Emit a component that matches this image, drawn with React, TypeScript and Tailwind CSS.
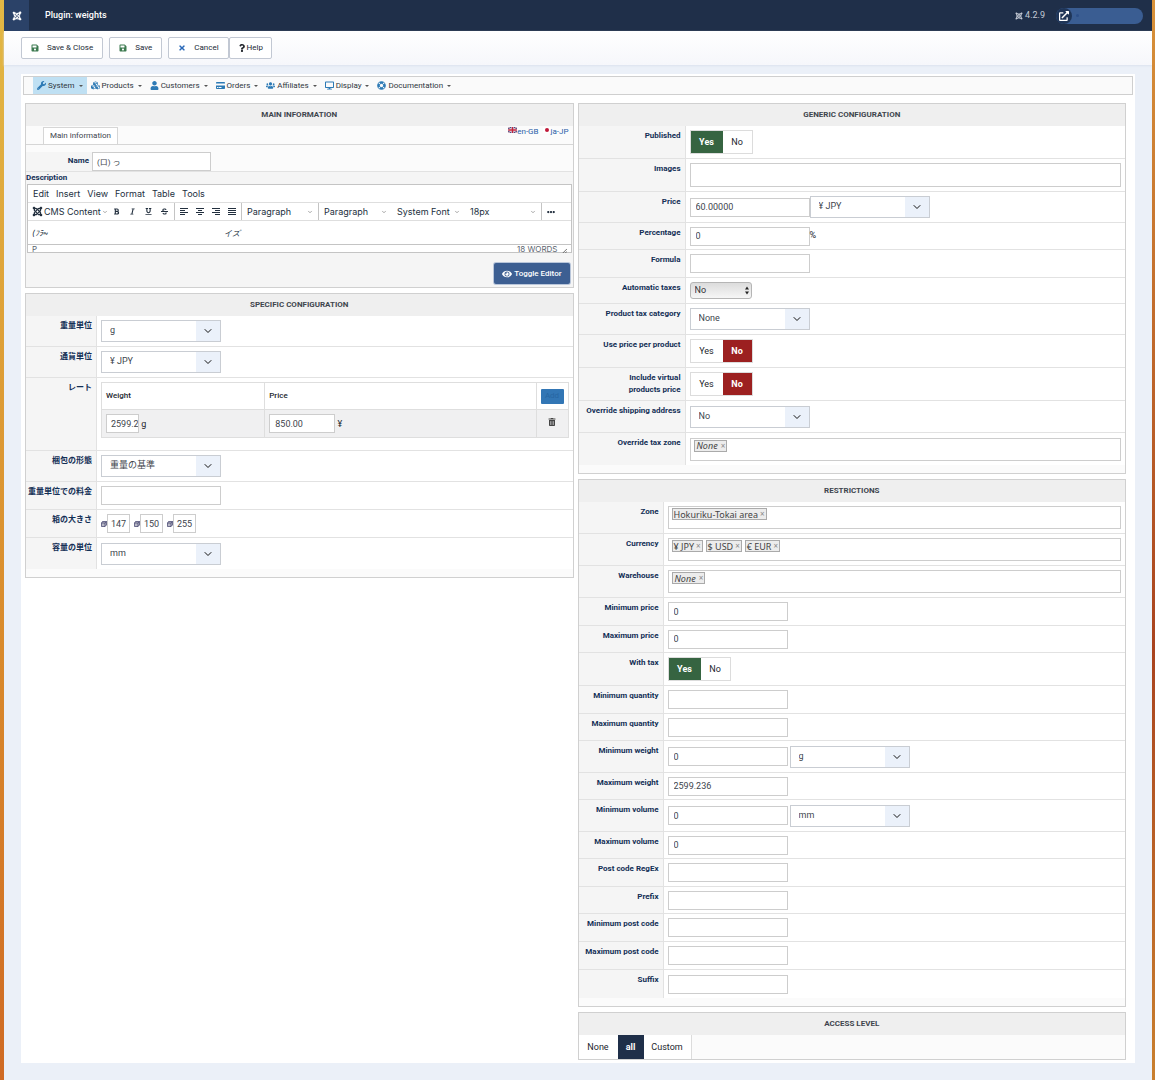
import type { ReactNode } from "react"
import {
  FaBold,
  FaCreditCard,
  FaCubes,
  FaDesktop,
  FaEllipsisH,
  FaExternalLinkAlt,
  FaEye,
  FaItalic,
  FaJoomla,
  FaLifeRing,
  FaQuestion,
  FaSave,
  FaStrikethrough,
  FaTimes,
  FaTrashAlt,
  FaUnderline,
  FaUser,
  FaUsers,
  FaWrench,
} from "react-icons/fa"
import { LuChevronDown } from "react-icons/lu"

const Header = () => (
  <header className="flex h-[31px] items-center bg-[#1f2f49] text-white">
    <a href="#home" aria-label="Home" className="flex h-full w-[25px] items-center justify-center bg-[#2b4268]">
      <FaJoomla className="size-[10px]" />
    </a>
    <h1 className="ml-4 text-[9px] font-medium">Plugin: weights</h1>
    <div className="ml-auto mr-[9px] flex items-center">
      <FaJoomla className="size-2 text-[#c5cbd6]" />
      <span className="ml-0.5 mr-[11px] text-[9px] text-[#c5cbd6]">4.2.9</span>
      <a href="#site" aria-label="Open site" className="flex h-4 w-[87px] items-center rounded-full bg-[#3a5d92]">
        <span className="flex size-4 items-center justify-center rounded-full bg-[#1f3557]">
          <FaExternalLinkAlt className="size-[10px]" />
        </span>
        <span className="ml-1 size-[3px] rounded-full bg-[#2c4f88]" />
      </a>
    </div>
  </header>
)

const ToolButton = ({ icon, children, className }: { icon: ReactNode; children: ReactNode; className: string }) => (
  <button
    type="button"
    className={`flex h-[22px] items-center rounded-[2px] border border-[#c2c8d3] bg-white text-[8px] text-[#222a36] ${className}`}
  >
    {icon}
    {children}
  </button>
)

const Toolbar = () => (
  <div className="flex h-[34px] items-center bg-linear-to-b from-white to-[#f6f7fb] pl-[17px] shadow-[0_1px_2px_#dbe2ee]">
    <ToolButton icon={<FaSave className="size-2 text-[#3d7a50]" />} className="gap-2 px-[9px]">
      Save &amp; Close
    </ToolButton>
    <ToolButton icon={<FaSave className="size-2 text-[#3d7a50]" />} className="ml-1.5 gap-2 px-[9px]">
      Save
    </ToolButton>
    <ToolButton icon={<FaTimes className="size-2 text-[#2a69b8]" />} className="ml-1.5 gap-2 px-[9px]">
      Cancel
    </ToolButton>
    <ToolButton icon={<FaQuestion className="size-2 text-[#22262d]" />} className="gap-px px-2">
      Help
    </ToolButton>
  </div>
)

const menu = [
  { label: "System", icon: FaWrench, active: true },
  { label: "Products", icon: FaCubes },
  { label: "Customers", icon: FaUser },
  { label: "Orders", icon: FaCreditCard },
  { label: "Affiliates", icon: FaUsers },
  { label: "Display", icon: FaDesktop },
  { label: "Documentation", icon: FaLifeRing },
]

const MenuBar = () => (
  <nav className="flex h-[19px] border border-[#cfcfcf] bg-[#fafafa] pl-[9px]">
    {menu.map(({ label, icon: Icon, active }) => (
      <a
        key={label}
        href={`#${label.toLowerCase()}`}
        className={`flex items-center px-1 text-[8px] text-[#2f3640] ${active ? "bg-[#bfe0f3]" : ""}`}
      >
        <Icon className="mr-0.5 size-[9px] text-[#2d7ab5]" />
        {label}
        <span className="ml-1 border-x-2 border-t-2 border-x-transparent border-t-[#555]" />
      </a>
    ))}
  </nav>
)

const Panel = ({ title, children }: { title: string; children: ReactNode }) => (
  <section className="border border-[#d0d0d0] bg-[#fbfbfb]">
    <h2 className="flex h-[22px] items-center justify-center bg-[#efefef] text-[8px] font-bold uppercase text-[#40454d]">
      {title}
    </h2>
    {children}
  </section>
)

type RowProps = {
  label: string
  htmlFor?: string
  labelWidth: string
  height: string
  children: ReactNode
}

const Row = ({ label, htmlFor, labelWidth, height, children }: RowProps) => {
  const text = "block text-right text-[8px] leading-[12px] font-bold text-[#132f55]"
  return (
    <div className={`flex border-b border-[#e2e2e2] bg-white last:border-b-0 ${height}`}>
      <div className={`shrink-0 border-r border-[#e2e2e2] bg-[#f5f5f5] pt-1 pr-1 ${labelWidth}`}>
        {htmlFor ? (
          <label htmlFor={htmlFor} className={text}>
            {label}
          </label>
        ) : (
          <span className={text}>{label}</span>
        )}
      </div>
      <div className="flex min-w-0 flex-1 items-center px-1 text-[9px]">{children}</div>
    </div>
  )
}

type TextInputProps = {
  id?: string
  value?: string
  size?: string
  label?: string
}

const TextInput = ({ id, value = "", size = "w-[120px] px-[5px]", label }: TextInputProps) => (
  <input
    id={id}
    aria-label={label}
    defaultValue={value}
    className={`h-[19px] border border-[#cdcdcd] bg-white text-[9px] text-[#40454d] ${size}`}
  />
)

const Select = ({ id, value, label }: { id?: string; value: string; label?: string }) => (
  <div className="relative h-[22px] w-[120px]">
    <select
      id={id}
      aria-label={label}
      className="size-full appearance-none border border-[#c9cdd3] bg-white pl-2 text-[9px] text-[#40454d]"
    >
      <option>{value}</option>
    </select>
    <span className="pointer-events-none absolute inset-y-px right-px flex w-6 items-center justify-center bg-[#ebf1fa]">
      <LuChevronDown className="size-3 text-[#111]" />
    </span>
  </div>
)

const YesNo = ({ id, value }: { id: string; value: "Yes" | "No" }) => (
  <div className="relative flex h-6 border border-[#dcdcdc] bg-white text-[9px] leading-[22px] text-[#22262d]">
    <label className={value === "Yes" ? "w-8 bg-[#366441] text-center font-bold text-white" : "w-8 text-center"}>
      <input type="radio" id={value === "Yes" ? id : undefined} name={id} defaultChecked={value === "Yes"} className="sr-only" />
      Yes
    </label>
    <label className={value === "No" ? "w-[29px] bg-[#9c2020] text-center font-bold text-white" : "w-[29px] text-center"}>
      <input type="radio" id={value === "No" ? id : undefined} name={id} defaultChecked={value === "No"} className="sr-only" />
      No
    </label>
  </div>
)

const ChipBox = ({ chips, italic }: { chips: string[]; italic?: boolean }) => (
  <div className="flex h-[23px] w-full items-start gap-[3px] border border-[#cdcdcd] bg-white px-[3px] pt-px">
    {chips.map((chip) => (
      <span
        key={chip}
        className="flex h-3 items-center border border-[#aaa] bg-[#ececec] px-px font-['Noto_Sans',sans-serif] text-[9px] leading-none text-[#444]"
      >
        <span className={italic ? "px-px italic" : ""}>{chip}</span>
        <button type="button" aria-label={`Remove ${chip}`} className="ml-0.5 text-[8px] text-[#888]">
          ×
        </button>
      </span>
    ))}
  </div>
)

const EditorDropdown = ({ label, className }: { label: string; className: string }) => (
  <button type="button" className={`flex items-center justify-between px-[5px] ${className}`}>
    {label}
    <LuChevronDown className="size-[6px] text-[#555]" />
  </button>
)

const textStyles = [
  { name: "Bold", icon: FaBold },
  { name: "Italic", icon: FaItalic },
  { name: "Underline", icon: FaUnderline },
  { name: "Strikethrough", icon: FaStrikethrough },
]

const alignments = [
  { name: "Align left", path: "M0 .5h8M0 2.500h5M0 4.500h8M0 6.500h5" },
  { name: "Align center", path: "M0 .5h8M2 2.500h4M0 4.500h8M2 6.500h4" },
  { name: "Align right", path: "M0 .5h8M3 2.500h5M0 4.500h8M3 6.500h5" },
  { name: "Justify", path: "M0 .5h8M0 2.500h8M0 4.500h8M0 6.500h8" },
]

const Editor = () => (
  <div className="mx-px border border-[#c4c4c4] bg-white font-[Inter,sans-serif] text-[9px] text-[#222f3e]">
    <div className="flex h-[17px] items-center gap-[7px] px-[5px]">
      {["Edit", "Insert", "View", "Format", "Table", "Tools"].map((item) => (
        <button key={item} type="button">
          {item}
        </button>
      ))}
    </div>
    <div className="flex h-[19px] items-stretch border-y border-[#dedede]">
      <button type="button" className="flex w-20 items-center pl-1 whitespace-nowrap">
        <FaJoomla className="mr-px size-[11px]" />
        CMS Content
        <LuChevronDown className="ml-auto size-[6px] text-[#555]" />
      </button>
      <div className="flex border-r border-[#c4c4c4] pr-0.5">
        {textStyles.map(({ name, icon: Icon }) => (
          <button key={name} type="button" aria-label={name} className="flex w-4 items-center justify-center">
            <Icon className="size-[7px]" />
          </button>
        ))}
      </div>
      <div className="flex border-r border-[#c4c4c4] px-px">
        {alignments.map(({ name, path }) => (
          <button key={name} type="button" aria-label={name} className="flex w-4 items-center justify-center">
            <svg viewBox="0 0 8 7" className="h-[7px] w-2" stroke="#222f3e">
              <path d={path} />
            </svg>
          </button>
        ))}
      </div>
      <EditorDropdown label="Paragraph" className="w-[77px] border-r border-[#c4c4c4]" />
      <EditorDropdown label="Paragraph" className="w-[73px]" />
      <EditorDropdown label="System Font" className="w-[73px] whitespace-nowrap" />
      <EditorDropdown label="18px" className="w-[77px] border-r border-[#c4c4c4]" />
      <button type="button" aria-label="More" className="px-[5px]">
        <FaEllipsisH className="size-2" />
      </button>
    </div>
    <div className="flex h-[23px] items-center px-1 text-[8px]">
      <span className="italic">(ﾌﾗ~</span>
      <span className="ml-44 italic">イズ</span>
    </div>
    <div className="flex h-2 items-center justify-between border-t border-[#c4c4c4] px-1 text-[8px] leading-none text-[#5c6570]">
      <span>P</span>
      <span className="flex items-end gap-1">
        18 WORDS
        <svg viewBox="0 0 6 6" className="size-[5px]" stroke="#555" fill="none">
          <path d="M1 6 6 1M4 6 6 4" />
        </svg>
      </span>
    </div>
  </div>
)

const MainInformation = () => (
  <Panel title="Main information">
    <div className="flex h-[19px] items-end border-b border-[#d6d6d6] pl-[17px]">
      <button type="button" className="h-[17px] border border-b-0 border-[#d6d6d6] bg-white px-1.5 text-[8px] text-[#40454d]">
        Main information
      </button>
      <div className="ml-auto flex self-start pr-1 text-[8px] leading-[12px] text-[#2a5ea8]">
        <a href="#en" className="flex items-start">
          <svg viewBox="0 0 16 11" className="mt-px h-[6px] w-[9px]">
            <path fill="#3a3f7c" d="M0 0h16v11H0z" />
            <path stroke="#e9c8ce" strokeWidth="2" d="m0 0 16 11M16 0 0 11" />
            <path stroke="#fff" strokeWidth="4" d="M8 0v11M0 5.5h16" />
            <path stroke="#c2233b" strokeWidth="2.4" d="M8 0v11M0 5.5h16" />
          </svg>
          en-GB
        </a>
        <a href="#ja" className="ml-1 flex items-start">
          <svg viewBox="0 0 16 11" className="mt-px h-[6px] w-2">
            <path fill="#fff" d="M0 0h16v11H0z" />
            <circle cx="8" cy="5.5" r="4" fill="#c01838" />
          </svg>
          ja-JP
        </a>
      </div>
    </div>
    <div className="flex h-[27px] items-end border-b border-[#e2e2e2]">
      <label htmlFor="name" className="h-[19px] w-[66px] bg-[#f5f5f5] pr-[3px] text-right text-[8px] leading-[18px] font-bold text-[#132f55]">
        Name
      </label>
      <input
        id="name"
        defaultValue="(ロ) っ"
        className="h-[19px] w-[119px] border border-[#cdcdcd] bg-white px-1 text-[8px] text-[#40454d]"
      />
    </div>
    <div className="bg-[#f5f5f5]">
      <h3 className="text-[8px] leading-[12px] font-bold text-[#132f55]">Description</h3>
      <Editor />
      <div className="flex justify-end px-[3px] pt-[10px] pb-[3px]">
        <button
          type="button"
          className="flex h-[21px] items-center gap-0.5 rounded-[2px] bg-[#3d5f92] px-2 text-[8px] font-medium text-white shadow-[0_0_0_1px_#b9c6da]"
        >
          <FaEye className="size-[10px]" />
          Toggle Editor
        </button>
      </div>
    </div>
  </Panel>
)

const BoxSize = ({ id, value, label }: { id?: string; value: string; label?: string }) => (
  <div className="mr-1 flex items-center">
    <svg viewBox="0 0 6 6" className="size-[6px]" stroke="#3b3b68" strokeWidth=".7" fill="#b9b9c6">
      <path d="M.5 2h3.500v3.500H.5zM.5 2l1-1.500h4v3.500L4 5.500M4 2l1.500-1.500" />
    </svg>
    <TextInput id={id} value={value} label={label} size="w-[23px] px-px text-center" />
  </div>
)

const SpecificConfiguration = () => {
  const w = "w-[71px]"
  return (
    <Panel title="Specific configuration">
      <div className="pb-2">
        <Row label="重量単位" htmlFor="weight-unit" labelWidth={w} height="min-h-[31px]">
          <Select id="weight-unit" value="g" />
        </Row>
        <Row label="通貨単位" htmlFor="currency-unit" labelWidth={w} height="min-h-[31px]">
          <Select id="currency-unit" value="¥ JPY" />
        </Row>
        <Row label="レート" labelWidth={w} height="min-h-[73px]">
          <table className="mb-2 w-full border-collapse text-left text-[#22262d]">
            <thead>
              <tr className="h-[27px] text-[8px]">
                <th className="w-[35%] border border-[#dedede] px-1 font-medium">Weight</th>
                <th className="border border-[#dedede] px-1 font-medium">Price</th>
                <th className="w-8 border border-[#dedede] px-1">
                  <button type="button" className="block h-[15px] w-[23px] rounded-[1px] bg-[#3276b5] font-normal text-[#2766a3]">
                    Add
                  </button>
                </th>
              </tr>
            </thead>
            <tbody>
              <tr className="h-7 bg-[#f0f0f1]">
                <td className="border border-[#dedede] px-1">
                  <TextInput value="2599.236" label="Weight" size="w-[33px] pl-1" /> g
                </td>
                <td className="border border-[#dedede] px-1">
                  <TextInput value="850.00" label="Price" size="w-[66px] px-[5px]" /> ¥
                </td>
                <td className="border border-[#dedede] pb-1">
                  <button type="button" aria-label="Delete" className="mx-auto block">
                    <FaTrashAlt className="size-2 text-[#444]" />
                  </button>
                </td>
              </tr>
            </tbody>
          </table>
        </Row>
        <Row label="梱包の形態" htmlFor="packing" labelWidth={w} height="min-h-[31px]">
          <Select id="packing" value="重量の基準" />
        </Row>
        <Row label="重量単位での料金" htmlFor="unit-fee" labelWidth={w} height="min-h-7">
          <TextInput id="unit-fee" />
        </Row>
        <Row label="箱の大きさ" htmlFor="box-length" labelWidth={w} height="min-h-7">
          <BoxSize id="box-length" value="147" />
          <BoxSize value="150" label="Width" />
          <BoxSize value="255" label="Height" />
        </Row>
        <Row label="容量の単位" htmlFor="volume-unit" labelWidth={w} height="min-h-[31px]">
          <Select id="volume-unit" value="mm" />
        </Row>
      </div>
    </Panel>
  )
}

const GenericConfiguration = () => {
  const w = "w-[107px]"
  return (
    <Panel title="Generic configuration">
      <div className="pb-2">
        <Row label="Published" htmlFor="published" labelWidth={w} height="min-h-[33px]">
          <YesNo id="published" value="Yes" />
        </Row>
        <Row label="Images" htmlFor="images" labelWidth={w} height="min-h-[33px]">
          <input id="images" className="h-6 w-full border border-[#cdcdcd] bg-white px-[5px]" />
        </Row>
        <Row label="Price" htmlFor="price" labelWidth={w} height="min-h-[31px]">
          <TextInput id="price" value="60.00000" />
          <Select label="Price currency" value="¥ JPY" />
        </Row>
        <Row label="Percentage" htmlFor="percentage" labelWidth={w} height="min-h-[27px]">
          <TextInput id="percentage" value="0" />%
        </Row>
        <Row label="Formula" htmlFor="formula" labelWidth={w} height="min-h-7">
          <TextInput id="formula" />
        </Row>
        <Row label="Automatic taxes" htmlFor="automatic-taxes" labelWidth={w} height="min-h-[26px]">
          <div className="relative h-[17px] w-[62px]">
            <select
              id="automatic-taxes"
              className="size-full appearance-none rounded-[3px] border border-[#b5b5b5] bg-linear-to-b from-[#dcdcdc] to-[#f6f6f6] pl-1 text-[9px] text-[#333]"
            >
              <option>No</option>
            </select>
            <svg viewBox="0 0 4 8" className="pointer-events-none absolute right-[3px] top-1 h-[9px] w-1" fill="#222">
              <path d="M0 3 2 0l2 3zM0 5l2 3 2-3z" />
            </svg>
          </div>
        </Row>
        <Row label="Product tax category" htmlFor="tax-category" labelWidth={w} height="min-h-[31px]">
          <Select id="tax-category" value="None" />
        </Row>
        <Row label="Use price per product" htmlFor="price-per-product" labelWidth={w} height="min-h-[33px]">
          <YesNo id="price-per-product" value="No" />
        </Row>
        <div className="flex h-[33px] border-b border-[#e2e2e2] bg-white">
          <div className="w-[107px] shrink-0 border-r border-[#e2e2e2] bg-[#f5f5f5] pt-1 pr-1">
            <label htmlFor="virtual" className="block text-right text-[8px] leading-[12px] font-bold text-[#132f55]">
              Include virtual
              <br />
              products price
            </label>
          </div>
          <div className="flex items-center px-1">
            <YesNo id="virtual" value="No" />
          </div>
        </div>
        <Row label="Override shipping address" htmlFor="shipping-address" labelWidth={w} height="min-h-8">
          <Select id="shipping-address" value="No" />
        </Row>
        <Row label="Override tax zone" labelWidth={w} height="min-h-8">
          <ChipBox chips={["None"]} italic />
        </Row>
      </div>
    </Panel>
  )
}

const Restrictions = () => {
  const w = "w-[85px]"
  return (
    <Panel title="Restrictions">
      <div className="pb-2">
        <Row label="Zone" labelWidth={w} height="min-h-8">
          <ChipBox chips={["Hokuriku-Tokai area"]} />
        </Row>
        <Row label="Currency" labelWidth={w} height="min-h-8">
          <ChipBox chips={["¥ JPY", "$ USD", "€ EUR"]} />
        </Row>
        <Row label="Warehouse" labelWidth={w} height="min-h-8">
          <ChipBox chips={["None"]} italic />
        </Row>
        <Row label="Minimum price" htmlFor="min-price" labelWidth={w} height="min-h-7">
          <TextInput id="min-price" value="0" />
        </Row>
        <Row label="Maximum price" htmlFor="max-price" labelWidth={w} height="min-h-[27px]">
          <TextInput id="max-price" value="0" />
        </Row>
        <Row label="With tax" htmlFor="with-tax" labelWidth={w} height="min-h-[33px]">
          <YesNo id="with-tax" value="Yes" />
        </Row>
        <Row label="Minimum quantity" htmlFor="min-quantity" labelWidth={w} height="min-h-7">
          <TextInput id="min-quantity" />
        </Row>
        <Row label="Maximum quantity" htmlFor="max-quantity" labelWidth={w} height="min-h-[27px]">
          <TextInput id="max-quantity" />
        </Row>
        <Row label="Minimum weight" htmlFor="min-weight" labelWidth={w} height="min-h-8">
          <TextInput id="min-weight" value="0" />
          <span className="w-0.5" />
          <Select label="Weight unit" value="g" />
        </Row>
        <Row label="Maximum weight" htmlFor="max-weight" labelWidth={w} height="min-h-[27px]">
          <TextInput id="max-weight" value="2599.236" />
        </Row>
        <Row label="Minimum volume" htmlFor="min-volume" labelWidth={w} height="min-h-8">
          <TextInput id="min-volume" value="0" />
          <span className="w-0.5" />
          <Select label="Volume unit" value="mm" />
        </Row>
        <Row label="Maximum volume" htmlFor="max-volume" labelWidth={w} height="min-h-[27px]">
          <TextInput id="max-volume" value="0" />
        </Row>
        <Row label="Post code RegEx" htmlFor="post-regex" labelWidth={w} height="min-h-7">
          <TextInput id="post-regex" />
        </Row>
        <Row label="Prefix" htmlFor="prefix" labelWidth={w} height="min-h-[27px]">
          <TextInput id="prefix" />
        </Row>
        <Row label="Minimum post code" htmlFor="min-post" labelWidth={w} height="min-h-7">
          <TextInput id="min-post" />
        </Row>
        <Row label="Maximum post code" htmlFor="max-post" labelWidth={w} height="min-h-7">
          <TextInput id="max-post" />
        </Row>
        <Row label="Suffix" htmlFor="suffix" labelWidth={w} height="min-h-7">
          <TextInput id="suffix" />
        </Row>
      </div>
    </Panel>
  )
}

const AccessLevel = () => (
  <Panel title="Access level">
    <div className="flex h-6 text-[9px] leading-6 text-[#22262d]">
      <button type="button" className="w-[39px] bg-white">None</button>
      <button type="button" className="w-[26px] bg-[#1f2f49] font-bold text-white">all</button>
      <button type="button" className="w-12 border-r border-[#dcdcdc] bg-white">Custom</button>
    </div>
  </Panel>
)

export default function App() {
  return (
    <div className="flex min-h-screen bg-[#ebf0f8] font-[Roboto,'Noto_Sans_CJK_JP',sans-serif] text-[#22262d]">
      <div className="w-1 shrink-0 bg-linear-to-b from-[#e2b845] via-[#d98a2c] via-60% to-[#cf6a24]" />
      <div className="min-w-0 flex-1">
        <Header />
        <Toolbar />
        <main className="mx-[17px] mt-[9px] mb-[17px] bg-white px-0.5 pt-0.5 pb-[3px]">
          <MenuBar />
          <div className="mt-2 flex items-start gap-1 pr-[7px] pl-0.5">
            <div className="flex min-w-0 flex-1 flex-col gap-[5px]">
              <MainInformation />
              <SpecificConfiguration />
            </div>
            <div className="flex min-w-0 flex-1 flex-col gap-[5px]">
              <GenericConfiguration />
              <Restrictions />
              <AccessLevel />
            </div>
          </div>
        </main>
      </div>
      <div className="w-[3px] shrink-0 bg-linear-to-b from-[#d8923a] via-[#a9431f] via-60% to-[#c9802f]" />
    </div>
  )
}
